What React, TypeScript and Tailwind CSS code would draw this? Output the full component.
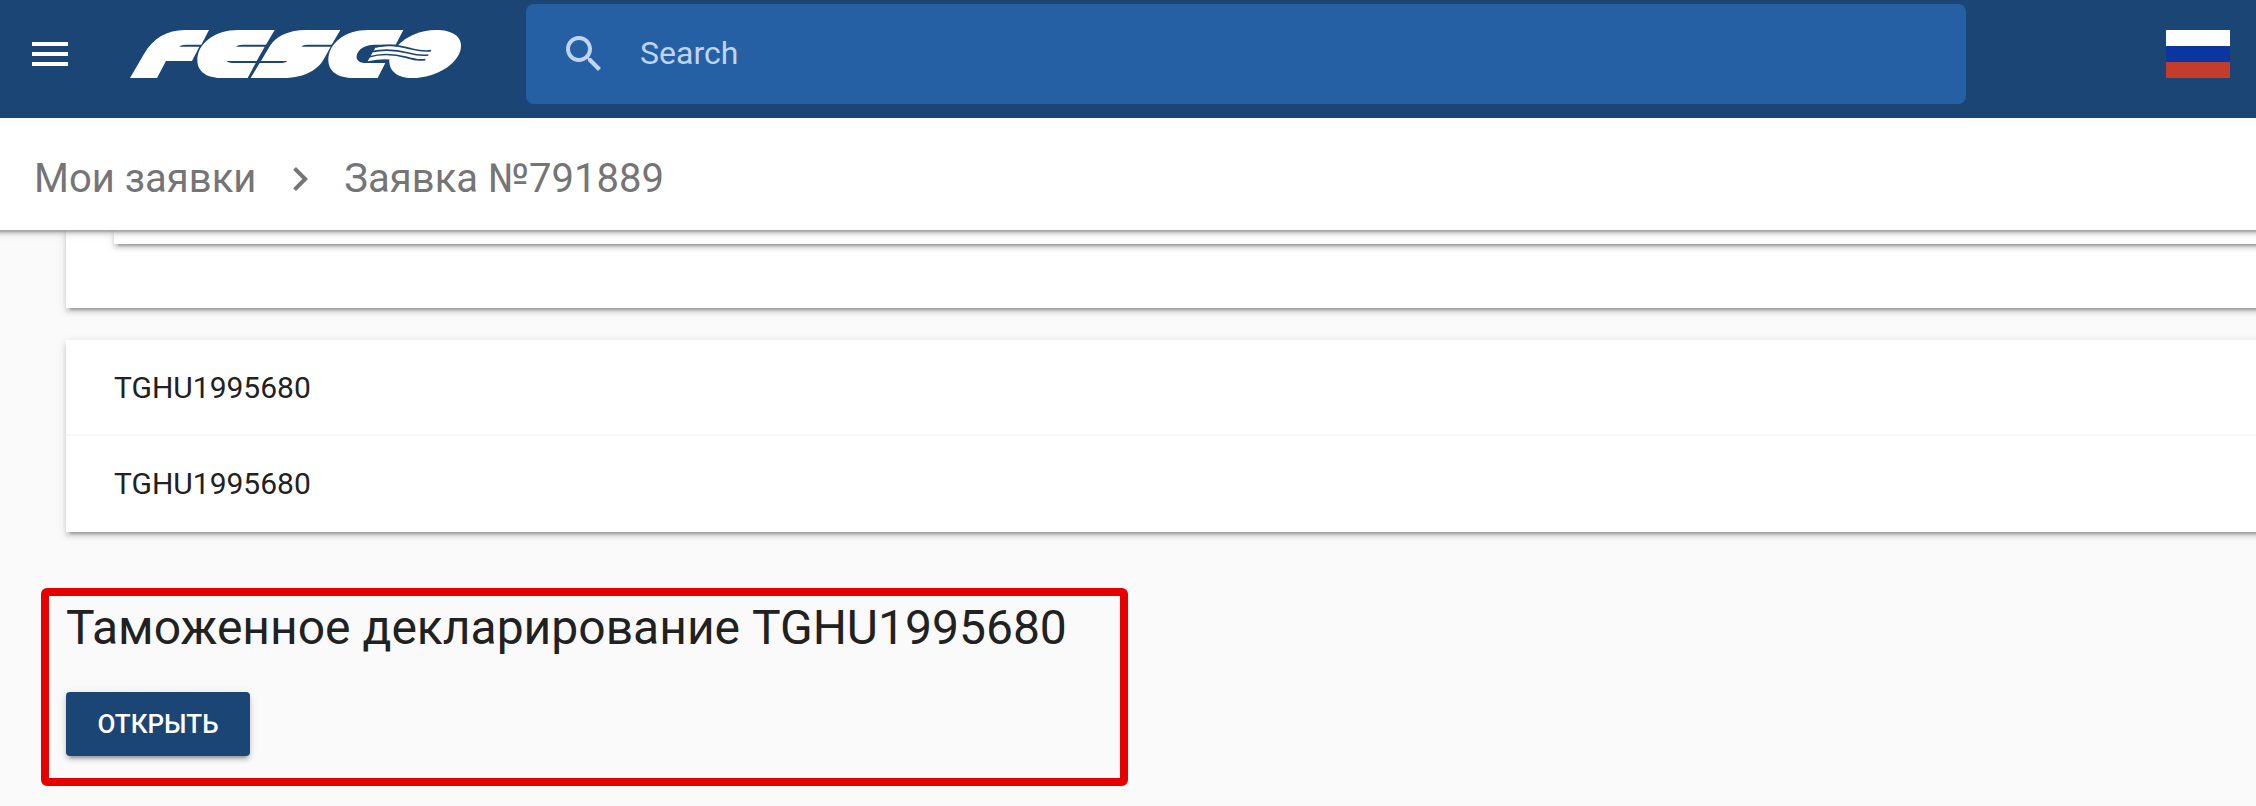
const Logo = () => (
  <svg aria-label="FESCO" viewBox="60 45 993 144" className="h-12 w-[331px] shrink-0" fill="#fff">
    <path d="M60 189L102 117C128 70 172 45 225 45H297L274 89H228Q213 89 208 95H268L246 138H168L141 189Z" />
    <path d="M494 45H385C315 45 262 85 262 135C262 170 290 189 335 189H413L437 144H372Q356 144 350 138H440L464 95H378Q383 89 398 89H468Z" />
    <path d="M691 45H590C530 45 492 68 476 99L453 138H532Q526 144 510 144H449L422 189H520C590 189 625 160 640 135L662 95H574Q579 89 592 89H665Z" />
    <path d="M880 45H775C705 45 655 85 655 135C655 170 685 189 730 189H803L826 144H768C748 144 738 135 740 122C744 102 765 89 795 89H857Z" />
    <path d="M978 45C930 45 888 65 864 91L838 134C836 167 862 189 905 189C985 189 1053 140 1053 92C1053 63 1025 45 978 45Z" />
    <path d="M796 98C830 91 852 92 885 98V141C842 130 812 130 773 139Z" />
    <g fill="none" stroke="#1b4575" strokeWidth="5">
      <path d="M798 95C848 86 876 95 905 102S945 110 963 107" />
      <path d="M784 110C828 101 865 106 895 114S935 122 955 120" />
      <path d="M776 126C820 113 860 119 890 127S925 136 946 134" />
    </g>
  </svg>
);

const ROWS = ["TGHU1995680", "TGHU1995680"];
const ELEVATION = "shadow-[0_6px_2px_-4px_rgba(0,0,0,0.2),0_4px_4px_0_rgba(0,0,0,0.14),0_2px_10px_0_rgba(0,0,0,0.12)]";

export default function App() {
  return (
    <div className="flex h-[806px] w-[2256px] flex-col overflow-hidden bg-[#fafafa] font-['Roboto',sans-serif] text-[#212121]">
      <header className="z-20 flex h-[118px] shrink-0 items-start bg-[#1b4575]">
        <svg viewBox="0 0 36 24" className="mt-[42px] ml-8 h-6 w-9 shrink-0" fill="#fff">
          <path d="M0 0h36v4H0zM0 10h36v4H0zM0 20h36v4H0z" />
        </svg>
        <div className="mt-[30px] ml-[62px] flex"><Logo /></div>
        <div className="mt-1 ml-[65px] flex h-[100px] w-[1440px] items-center rounded-lg bg-[#2660a4] text-[#bfd4ef]">
          <svg viewBox="0 0 24 24" className="ml-[34px] size-12" fill="currentColor">
            <path d="M15.5 14h-.79l-.28-.27C15.41 12.59 16 11.11 16 9.5 16 5.91 13.09 3 9.5 3S3 5.91 3 9.5 5.91 16 9.5 16c1.61 0 3.09-.59 4.23-1.57l.27.28v.79l5 4.99L20.49 19l-4.99-5zm-6 0C7.01 14 5 11.99 5 9.5S7.01 5 9.5 5 14 7.01 14 9.5 11.99 14 9.5 14z" />
          </svg>
          <span className="mb-[3px] ml-8 text-[32px]">Search</span>
        </div>
        <div className="mt-[30px] mr-[26px] ml-auto flex h-12 w-16 flex-col">
          <div className="flex-1 bg-white" />
          <div className="flex-1 bg-[#0c369f]" />
          <div className="flex-1 bg-[#c43c2c]" />
        </div>
      </header>

      <nav className={`z-10 -mx-4 flex h-28 shrink-0 items-center bg-white pt-[9px] pl-[50px] text-[40px] text-[#757575] ${ELEVATION}`}>
        <span>Мои заявки</span>
        <svg viewBox="0 0 24 24" className="mx-5 size-12" fill="currentColor">
          <path d="M10 6L8.59 7.41 13.17 12l-4.58 4.59L10 18l6-6z" />
        </svg>
        <span>Заявка №791889</span>
      </nav>

      <main className="flex flex-1 flex-col items-start pl-[66px]">
        <section className={`flex h-[78px] w-[2230px] shrink-0 items-start bg-white pl-12 ${ELEVATION}`}>
          <div className={`h-[14px] w-[2182px] bg-white ${ELEVATION}`} />
        </section>
        <section className={`mt-8 w-[2230px] shrink-0 bg-white ${ELEVATION}`}>
          {ROWS.map((row, i) => (
            <div key={i} className="flex h-24 items-center border-b-2 border-[#f7f7f7] pl-12 text-[30px] last:border-white">
              {row}
            </div>
          ))}
        </section>
        <section className="mt-14 -ml-[25px] flex h-[198px] w-[1087px] shrink-0 flex-col items-start rounded-md border-8 border-[#e60000] pl-[17px]">
          <h2 className="mt-1 text-[48px] leading-[56px]">Таможенное декларирование TGHU1995680</h2>
          <button className={`mt-9 h-16 w-[184px] rounded bg-[#1b4575] text-[26px] font-medium text-white ${ELEVATION}`}>
            <span className="block">ОТКРЫТЬ</span>
          </button>
        </section>
      </main>
    </div>
  );
}
